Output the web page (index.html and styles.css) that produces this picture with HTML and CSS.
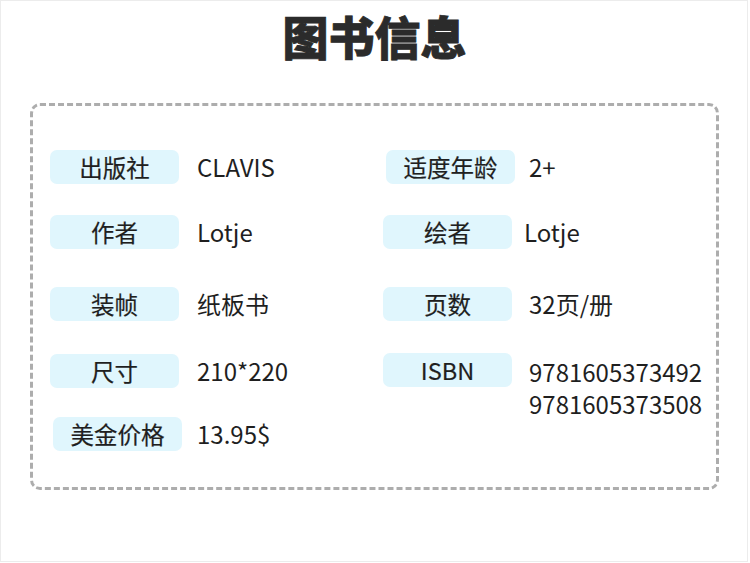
FILE: index.html
```html
<!DOCTYPE html>
<html lang="zh-CN">
<head>
<meta charset="utf-8">
<title>图书信息</title>
<link rel="stylesheet" href="styles.css">
</head>
<body>
<div class="page">
  <h1 class="title">图书信息</h1>
  <div class="card">
    <div class="col col-left">
      <div class="row"><div class="label">出版社</div><div class="value">CLAVIS</div></div>
      <div class="row row-2"><div class="label">作者</div><div class="value">Lotje</div></div>
      <div class="row row-3"><div class="label">装帧</div><div class="value">纸板书</div></div>
      <div class="row row-4"><div class="label">尺寸</div><div class="value">210*220</div></div>
      <div class="row row-5 shift"><div class="label">美金价格</div><div class="value value-tight">13.95$</div></div>
    </div>
    <div class="col col-right">
      <div class="row shift"><div class="label">适度年龄</div><div class="value value-tight">2+</div></div>
      <div class="row row-2"><div class="label">绘者</div><div class="value value-near">Lotje</div></div>
      <div class="row row-3"><div class="label">页数</div><div class="value">32页/册</div></div>
      <div class="row row-4b"><div class="label">ISBN</div><div class="value value-multi">9781605373492<br>9781605373508</div></div>
    </div>
  </div>
</div>
</body>
</html>
```
FILE: styles.css
```css
* { box-sizing: border-box; }
html, body { margin: 0; padding: 0; background: #ffffff; }
body {
  font-family: "Noto Sans CJK SC", "Noto Sans", sans-serif;
  color: #222222;
}
.page {
  width: 748px;
  height: 562px;
  border: 1px solid #ececec;
  padding: 11px 28px 0 29px;
}
.title {
  margin: 0;
  height: 46px;
  line-height: 46px;
  font-size: 46px;
  font-weight: 900;
  text-align: center;
  color: #2b2b2b;
  -webkit-text-stroke: 0.8px #2b2b2b;
}
.card {
  margin-top: 45px;
  width: 689px;
  height: 387px;
  border: 3px dashed #adadad;
  border-radius: 10px;
  padding: 44px 0 0 17px;
  display: grid;
  grid-template-columns: 333px 1fr;
  align-items: start;
}
.col { display: flex; flex-direction: column; }
.row { display: flex; align-items: flex-start; }
.row-2 { margin-top: 31px; }
.row-3 { margin-top: 38px; }
.row-4 { margin-top: 33px; }
.row-4b { margin-top: 32px; }
.row-5 { margin-top: 29px; }
.shift { margin-left: 3px; }
.label {
  width: 129px;
  height: 34px;
  line-height: 34px;
  border-radius: 7px;
  background: #e0f6fd;
  text-align: center;
  font-size: 23.5px;
  color: #1f1f1f;
  -webkit-text-stroke: 0.2px #1f1f1f;
}
.value {
  margin-left: 18px;
  height: 34px;
  line-height: 34px;
  font-size: 24px;
  color: #1f1f1f;
  white-space: nowrap;
}
.col-right .value { margin-left: 17px; }
.col-right .value-tight { margin-left: 14px; }
.col-left .value-tight { margin-left: 15px; }
.col-right .value-near { margin-left: 12px; }
.value-multi {
  height: auto;
  line-height: 32px;
  padding-top: 3px;
}
```
